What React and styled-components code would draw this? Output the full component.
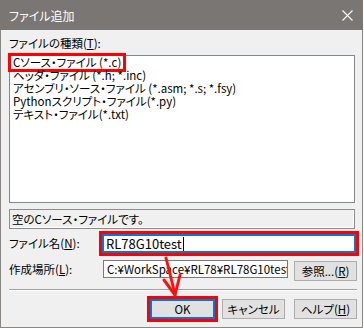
import React from "react";
import styled, { createGlobalStyle } from "styled-components";

const font = `"Noto Sans CJK JP", "Noto Sans", sans-serif`;

const GlobalStyle = createGlobalStyle`
  html, body {
    margin: 0;
    padding: 0;
    background: #ffffff;
  }
`;

const Window = styled.div`
  position: relative;
  width: 363px;
  height: 328px;
  box-sizing: border-box;
  display: flex;
  flex-direction: column;
  background: #f0f0f0;
  border: 1px solid #8a8684;
  border-top: none;
  font-family: ${font};
  font-size: 11.5px;
  color: #000;
  font-feature-settings: "palt";
`;

const TitleBar = styled.div`
  height: 30px;
  margin: 0 -1px;
  padding: 0 10px 0 9px;
  display: flex;
  align-items: center;
  justify-content: space-between;
  background: #7a7674;
  color: #ffffff;
  font-size: 12px;
`;

const Body = styled.div`
  flex: 1;
  display: flex;
  flex-direction: column;
  padding: 6px 5px 0 8px;
`;

const Label = styled.div`
  line-height: 14px;
  height: 14px;
  white-space: nowrap;
`;

const U = styled.span`
  text-decoration: underline;
`;

const ListBox = styled.div`
  margin: 5px 2px 0 0;
  height: 148px;
  box-sizing: border-box;
  border: 1px solid #828790;
  background: #ffffff;
  padding: 0 0 0 1px;
`;

const Item = styled.div`
  height: 13px;
  line-height: 13px;
  white-space: nowrap;
  padding-left: 2px;
`;

const Selected = styled.span`
  display: inline-block;
  height: 13px;
  line-height: 13px;
  margin-left: -2px;
  padding: 0 2px;
  outline: 3px solid #ff0000;
`;

const Status = styled.div`
  margin: 6px 2px 0 0;
  height: 20px;
  box-sizing: border-box;
  border: 1px solid #8c8c8c;
  box-shadow: inset -1px -1px 0 #ffffff;
  padding-left: 2px;
  line-height: 18px;
  white-space: nowrap;
`;

const FieldRow = styled.div`
  display: grid;
  grid-template-columns: 93px auto auto;
  align-items: start;
  margin-top: ${(p) => p.$top}px;
`;

const RowLabel = styled.div`
  line-height: ${(p) => p.$h}px;
  white-space: nowrap;
`;

const TextBox = styled.div`
  box-sizing: border-box;
  width: ${(p) => p.$w}px;
  height: ${(p) => p.$h}px;
  margin-left: ${(p) => p.$ml || 0}px;
  background: #ffffff;
  border: 1px solid ${(p) => (p.$focused ? "#0078d7" : "#7a7a7a")};
  box-shadow: ${(p) => (p.$focused ? "inset 0 0 0 1px #0078d7" : "none")};
  outline: ${(p) => (p.$marked ? "3px solid #ff0000" : "none")};
  padding-left: 3px;
  display: flex;
  align-items: center;
  overflow: hidden;
  white-space: nowrap;
  font-size: ${(p) => p.$fs || 11.5}px;
`;

const Caret = styled.span`
  display: inline-block;
  width: 1px;
  height: 14px;
  background: #000;
  margin-left: 1px;
`;

const Button = styled.button`
  box-sizing: border-box;
  width: ${(p) => p.$w || 63}px;
  height: 20px;
  margin-left: ${(p) => p.$ml || 0}px;
  margin-top: ${(p) => p.$mt || 0}px;
  padding: 0;
  background: #e1e1e1;
  border: ${(p) => (p.$default ? "2px solid #0078d7" : "1px solid #adadad")};
  outline: ${(p) => (p.$marked ? "3px solid #ff0000" : "none")};
  font-family: ${font};
  font-size: 11.5px;
  font-feature-settings: "palt";
  color: #000;
  line-height: 16px;
`;

const Separator = styled.div`
  margin: 8px 0 0 0;
  height: 1px;
  background: #a0a0a0;
  box-shadow: 0 1px 0 #ffffff;
`;

const ButtonRow = styled.div`
  display: flex;
  justify-content: flex-end;
  gap: 7px;
  margin-top: 9px;
`;

const Overlay = styled.svg`
  position: absolute;
  left: -1px;
  top: 0;
  pointer-events: none;
`;

const CloseIcon = () => (
  <svg width="11" height="11" viewBox="0 0 11 11">
    <path d="M0.5 0.5 L10.5 10.5 M10.5 0.5 L0.5 10.5" stroke="#fff" strokeWidth="1.1" fill="none" />
  </svg>
);

export default function App() {
  return (
    <>
      <GlobalStyle />
      <Window>
        <TitleBar>
          <span>ファイル追加</span>
          <CloseIcon />
        </TitleBar>
        <Body>
          <Label>
            ファイルの種類(<U>T</U>):
          </Label>
          <ListBox>
            <Item>
              <Selected>Cソース・ファイル (*.c)</Selected>
            </Item>
            <Item>ヘッダ・ファイル (*.h; *.inc)</Item>
            <Item>アセンブリ・ソース・ファイル (*.asm; *.s; *.fsy)</Item>
            <Item>Pythonスクリプト・ファイル(*.py)</Item>
            <Item>テキスト・ファイル(*.txt)</Item>
          </ListBox>
          <Status>空のCソース・ファイルです。</Status>
          <FieldRow $top={5}>
            <RowLabel $h={19}>
              ファイル名(<U>N</U>):
            </RowLabel>
            <TextBox $w={254} $h={19} $focused $marked $fs={13}>
              RL78G10test
              <Caret />
            </TextBox>
          </FieldRow>
          <FieldRow $top={7}>
            <RowLabel $h={18}>
              作成場所(<U>L</U>):
            </RowLabel>
            <TextBox $w={185} $h={18} $ml={1}>
              C:¥WorkSpace¥RL78¥RL78G10test¥
            </TextBox>
            <Button $ml={6} $mt={1}>
              参照...(<U>R</U>)
            </Button>
          </FieldRow>
          <Separator />
          <ButtonRow>
            <Button $w={65} $default $marked>
              OK
            </Button>
            <Button>キャンセル</Button>
            <Button $ml={2}>
              ヘルプ(<U>H</U>)
            </Button>
          </ButtonRow>
        </Body>
        <Overlay width="363" height="328">
          <g stroke="#ff1010" strokeWidth="3" strokeLinecap="round" fill="none">
            <path d="M166 258 L175 294" />
            <path d="M164 280 L175 295" />
            <path d="M180 275 L175 295" />
          </g>
        </Overlay>
      </Window>
    </>
  );
}
